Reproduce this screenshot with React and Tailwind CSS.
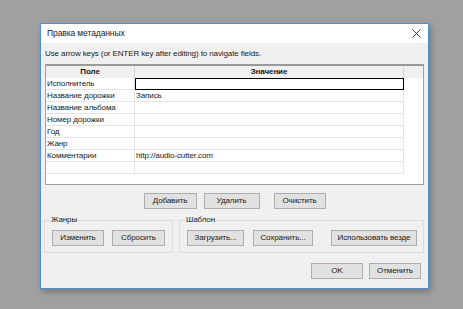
import React from "react"

const rows = [
  ["Исполнитель", ""],
  ["Название дорожки", "Запись"],
  ["Название альбома", ""],
  ["Номер дорожки", ""],
  ["Год", ""],
  ["Жанр", ""],
  ["Комментарии", "http://audio-cutter.com"],
  ["", ""],
]

function Btn({ children, className = "" }) {
  return (
    <button className={"h-[16px] border border-[#adadad] bg-[#e1e1e1] text-[8px] leading-none whitespace-nowrap text-[#1a1a1a] " + className}>
      {children}
    </button>
  )
}

export default function App() {
  return (
    <div className="w-[463px] h-[309px] bg-[#a0a0a0] pt-[23px] pl-[40px] font-['Liberation_Sans',Arial,sans-serif] text-[8px] tracking-[-0.1px] text-[#1a1a1a]">
      <div className="w-[389px] h-[266px] border border-[#4f8fcf] bg-[#f0f0f0] flex flex-col shadow-[2px_3px_6px_rgba(0,0,0,0.25)]">
        {/* title bar */}
        <div className="h-[19px] bg-white flex items-center justify-between pl-[6px] pr-[7px]">
          <span className="text-[8.5px]">Правка метаданных</span>
          <svg width="9" height="9" viewBox="0 0 9 9" className="text-[#222]">
            <path d="M0.5 0.5 L8.5 8.5 M8.5 0.5 L0.5 8.5" stroke="currentColor" strokeWidth="0.9" />
          </svg>
        </div>

        <div className="flex flex-col px-[4px]">
          <div className="h-[21px] flex items-center pt-[1px]">
            Use arrow keys (or ENTER key after editing) to navigate fields.
          </div>

          {/* list view */}
          <div className="w-[379px] h-[121px] border border-[#a0a0a0] border-t-[2px] border-t-[#9a9a9a] bg-white flex flex-col">
            <div className="h-[12px] flex bg-[#f0f0f0] font-bold">
              <div className="w-[89px] text-center border-r border-[#d5d5d5] leading-[12px]">Поле</div>
              <div className="w-[269px] text-center border-r border-[#d5d5d5] leading-[12px]">Значение</div>
              <div className="flex-1" />
            </div>
            {rows.map(([f, v], i) => (
              <div key={i} className="h-[12px] flex">
                <div className="w-[89px] pl-[1px] leading-[11px] border-r border-b border-[#e3e3e3]">{f}</div>
                {i === 0 ? (
                  <div className="w-[269px] border-[1.5px] border-black" />
                ) : (
                  <div className="w-[269px] pl-[1px] leading-[11px] border-r border-b border-[#e3e3e3]">{v}</div>
                )}
              </div>
            ))}
          </div>

          <div className="flex justify-center gap-[7px] mt-[8px]">
            <Btn className="w-[53px]">Добавить</Btn>
            <Btn className="w-[56px] mr-[7px]">Удалить</Btn>
            <Btn className="w-[52px]">Очистить</Btn>
          </div>

          <div className="flex gap-[6px] mt-[7px]">
            <fieldset className="w-[129px] h-[37px] border border-[#dcdcdc] -ml-[1px]">
              <legend className="ml-[5px] px-[1px] leading-none">Жанры</legend>
              <div className="flex gap-[8px] pl-[7px] pt-[6px]">
                <Btn className="w-[52px]">Изменить</Btn>
                <Btn className="w-[53px]">Сбросить</Btn>
              </div>
            </fieldset>
            <fieldset className="w-[245px] h-[37px] border border-[#dcdcdc]">
              <legend className="ml-[5px] px-[1px] leading-none">Шаблон</legend>
              <div className="flex pl-[7px] pt-[6px]">
                <Btn className="w-[57px]">Загрузить...</Btn>
                <Btn className="w-[60px] ml-[9px]">Сохранить...</Btn>
                <Btn className="w-[86px] ml-[18px]">Использовать везде</Btn>
              </div>
            </fieldset>
          </div>

          <div className="flex justify-end gap-[6px] mt-[10px] pr-[3px]">
            <Btn className="w-[52px] border-[#0078d7] border-[1.5px]">OK</Btn>
            <Btn className="w-[52px]">Отменить</Btn>
          </div>
        </div>
      </div>
    </div>
  )
}
